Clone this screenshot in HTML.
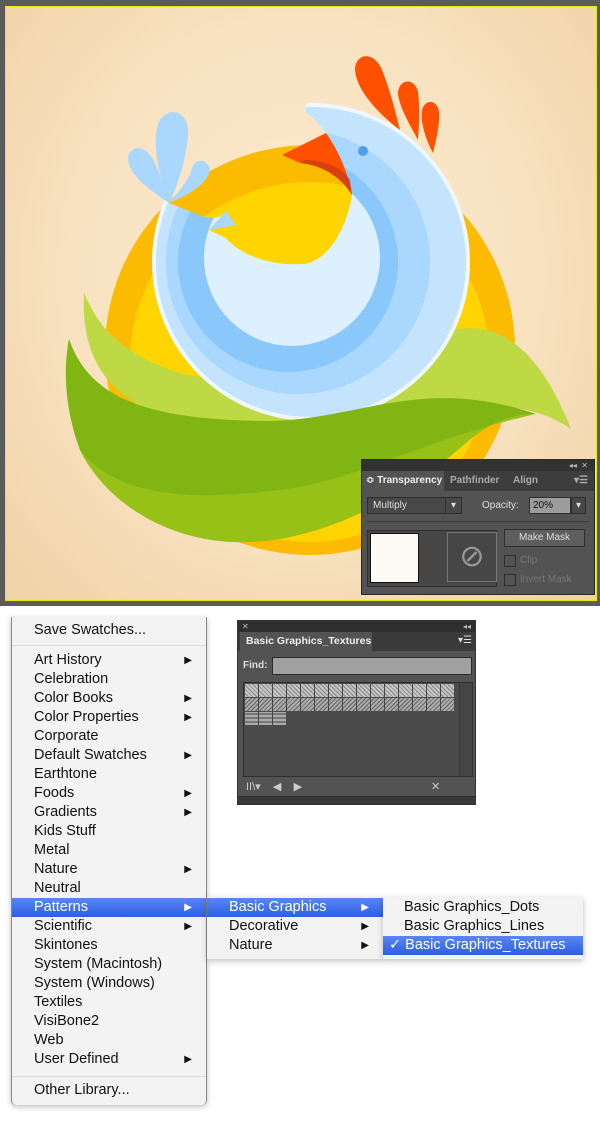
<!DOCTYPE html>
<html><head><meta charset="utf-8"><style>
*{margin:0;padding:0;box-sizing:border-box}
body{width:600px;height:1133px;background:#fff;position:relative;overflow:hidden;font-family:"Lucida Grande","Liberation Sans",sans-serif}
.top{position:absolute;left:0;top:0;width:600px;height:606px;background:#5b5b5b}
.canvas{position:absolute;left:5px;top:6px;width:592px;height:595px;border:1px solid #e8e800;background:radial-gradient(ellipse at 50% 45%,#fcebd0 0%,#f8e2c0 55%,#f0d2a6 100%);overflow:hidden}
.panel{position:absolute;left:361px;top:459px;width:234px;height:136px;background:#535353;border:1px solid #2a2a2a;font-size:10px;color:#ddd}
.panel .bar{height:11px;background:#323232;color:#bbb;font-size:8px;text-align:right;padding-right:6px;line-height:11px}
.tabs{height:20px;background:#3d3d3d;position:relative}
.tabs span{position:absolute;top:0;height:20px;line-height:20px;font-weight:bold;color:#aaa;font-size:10px;white-space:nowrap}
.box{position:absolute;border:1px solid #2e2e2e}
.menu{position:absolute;background:#f3f3f3;font-size:14.5px;color:#111;box-shadow:0 2px 6px rgba(0,0,0,.25)}
.it{position:absolute;left:0;right:0;height:19px;line-height:19px;padding-left:22px;white-space:nowrap}
.ar{position:absolute;right:14px;top:0;font-size:10px}
.hl{background:linear-gradient(#5a86f2,#2d5fe6);color:#fff}
.tp{position:absolute;left:237px;top:620px;width:239px;height:185px;background:#535353;border:1px solid #333;color:#ddd;font-size:10px}
</style></head><body>
<div class="top"><div class="canvas">
<svg width="592" height="595" viewBox="6 7 592 595" xmlns="http://www.w3.org/2000/svg">
<defs>
<mask id="m" maskUnits="userSpaceOnUse" x="0" y="0" width="600" height="600">
<rect x="0" y="0" width="600" height="600" fill="#fff"/>
<path d="M169 203 L100 60 L306 60 L306 113 C325 125 345 160 352 195 C345 235 325 262 303 264 C270 266 240 255 226 238 L209 230 L226 211 C215 225 200 215 169 203Z" fill="#000"/>
</mask>
</defs>
<circle cx="310" cy="350" r="205" fill="#fdbb00"/>
<circle cx="310" cy="362" r="180" fill="#ffd400"/>
<path d="M84 293 C100 330 120 350 170 370 C260 400 380 350 452 330 C500 320 540 350 571 429 C530 400 470 400 420 425 C340 440 250 430 192 421 C120 410 80 370 84 293Z" fill="#bfd944"/>
<g mask="url(#m)">
<circle cx="311" cy="262" r="159" fill="#eef8fe"/>
<circle cx="311" cy="262" r="155" fill="#c4e3fc"/>
<circle cx="298" cy="262" r="132" fill="#a9d7fd"/>
<circle cx="288" cy="262" r="110" fill="#8ac8fb"/>
<circle cx="292" cy="258" r="88" fill="#dcf1fd"/>
</g>
<path d="M209 230 L226 211 L236 225 Z" fill="#a9d7fd"/>
<path d="M282 155 L326 133 C338 150 348 172 352 195 C340 175 320 165 300 163 Z" fill="#ff5000"/>
<path d="M300 163 C320 165 340 175 352 195 L350 180 C343 168 325 160 305 160Z" fill="#c83a10" opacity=".7"/>
<circle cx="363" cy="151" r="5" fill="#4fa0e6"/>
<path d="M69 339 C90 400 150 420 268 421 C360 420 420 375 536 414 C500 415 480 430 460 448 C400 500 320 540 249 542 C180 545 110 510 80 450 C65 410 63 370 69 339Z" fill="#80b514"/>
<path d="M80 450 C120 500 200 500 280 490 C360 480 420 440 536 414 C500 415 480 430 460 448 C400 500 320 540 249 542 C180 545 110 510 80 450Z" fill="#97c117"/>
<path d="M169 203 C160 180 150 140 160 120 C170 105 190 112 188 135 C186 160 178 185 169 203Z" fill="#a9d7fd"/>
<path d="M169 203 C150 190 128 175 128 158 C130 145 145 145 152 158 C160 172 165 190 169 203Z" fill="#a9d7fd"/>
<path d="M169 203 C180 190 190 178 192 168 C195 158 208 158 210 170 C208 182 190 195 169 203Z" fill="#a9d7fd"/>
<path d="M400 130 C380 115 355 90 355 68 C357 52 375 52 382 70 C390 90 395 110 400 130Z" fill="#ff5000"/>
<path d="M418 140 C410 125 398 105 398 92 C400 78 415 78 418 92 C420 108 419 125 418 140Z" fill="#ff5000"/>
<path d="M433 153 C426 140 420 122 422 110 C425 98 438 100 439 112 C440 125 436 140 433 153Z" fill="#ff5000"/>
</svg>
</div>
<div class="panel">
<div class="bar">◂◂ &nbsp;✕</div>
<div class="tabs"><span style="left:0;width:82px;background:#535353;color:#eee;padding-left:4px">≎ Transparency</span><span style="left:88px">Pathfinder</span><span style="left:151px">Align</span><span style="right:6px">▾☰</span></div>
<div class="box" style="left:5px;top:37px;width:95px;height:17px;background:#484848;color:#ddd;padding-left:5px;line-height:15px">Multiply<span style="position:absolute;right:0;top:0;width:16px;border-left:1px solid #333;text-align:center">▾</span></div>
<div style="position:absolute;left:120px;top:40px;color:#ddd">Opacity:</div>
<div class="box" style="left:167px;top:37px;width:42px;height:17px;background:#9c9c9c;color:#111;padding-left:3px;line-height:15px">20%</div>
<div class="box" style="left:209px;top:37px;width:15px;height:17px;background:#484848;text-align:center;line-height:15px">▾</div>
<div style="position:absolute;left:5px;top:61px;width:222px;border-top:1px solid #3c3c3c"></div>
<div class="box" style="left:5px;top:70px;width:130px;height:57px;background:#464646"></div>
<div style="position:absolute;left:8px;top:73px;width:49px;height:50px;background:#fdfaf6;border:1px solid #111"></div>
<div style="position:absolute;left:85px;top:72px;width:50px;height:50px;border:1px solid #777;color:#999;font-size:30px;text-align:center;line-height:48px">⊘</div>
<div class="box" style="left:142px;top:69px;width:81px;height:18px;background:#5e5e5e;border-color:#2e2e2e;color:#ddd;text-align:center;line-height:16px">Make Mask</div>
<div class="box" style="left:142px;top:95px;width:12px;height:12px"></div><div style="position:absolute;left:158px;top:95px;color:#777">Clip</div>
<div class="box" style="left:142px;top:114px;width:12px;height:12px"></div><div style="position:absolute;left:158px;top:114px;color:#777">Invert Mask</div>
</div>
</div>

<div class="tp">
<div style="height:11px;background:#2f2f2f;font-size:8px;color:#bbb;line-height:11px;padding:0 4px">✕<span style="float:right">◂◂</span></div>
<div style="height:19px;background:#3a3a3a;position:relative"><span style="position:absolute;left:2px;top:0;width:132px;height:19px;background:#535353;font-weight:bold;color:#eee;padding-left:6px;line-height:19px;font-size:10.5px;white-space:nowrap">Basic Graphics_Textures</span><span style="position:absolute;right:3px;top:3px">▾☰</span></div>
<div style="position:absolute;left:5px;top:39px;font-weight:bold">Find:</div>
<div style="position:absolute;left:34px;top:36px;width:200px;height:18px;background:#a0a0a0;border:1px solid #2a2a2a"></div>
<div style="position:absolute;left:5px;top:61px;width:230px;height:95px;background:#4a4a4a;border:1px solid #2e2e2e">
<div style="position:absolute;right:0;top:0;width:13px;height:93px;background:#454545;border-left:1px solid #3a3a3a"></div>
<div style="position:absolute;left:1px;top:1px;width:209px;height:13px;background:repeating-linear-gradient(90deg,transparent 0 13px,#444 13px 14px),repeating-linear-gradient(45deg,#c4c4c4 0 2px,#8a8a8a 2px 3px)"></div>
<div style="position:absolute;left:1px;top:15px;width:209px;height:13px;background:repeating-linear-gradient(90deg,transparent 0 13px,#444 13px 14px),repeating-linear-gradient(-45deg,#aaa 0 2px,#666 2px 3px)"></div>
<div style="position:absolute;left:1px;top:29px;width:41px;height:13px;background:repeating-linear-gradient(90deg,transparent 0 13px,#444 13px 14px),repeating-linear-gradient(0deg,#aaa 0 2px,#777 2px 4px)"></div>
</div>
<div style="position:absolute;left:8px;top:159px;color:#ccc;font-size:11px">II\▾ &nbsp;&nbsp; ◀ &nbsp;&nbsp; ▶<span style="position:absolute;left:185px">✕</span></div>
<div style="position:absolute;left:0;bottom:0;width:237px;height:8px;background:#3a3a3a;border-top:1px solid #2a2a2a"></div>
</div>

<div class="menu" style="left:11px;top:617px;width:196px;height:488px;border-radius:0 0 5px 5px;border-left:1px solid #888;border-right:1px solid #888">
<div class="it" style="top:4px">Save Swatches...</div>
<div style="position:absolute;left:0;right:0;top:28px;border-top:1px solid #ddd"></div>
<div class="it" style="top:34px">Art History<span class="ar">▶</span></div>
<div class="it" style="top:53px">Celebration</div>
<div class="it" style="top:72px">Color Books<span class="ar">▶</span></div>
<div class="it" style="top:91px">Color Properties<span class="ar">▶</span></div>
<div class="it" style="top:110px">Corporate</div>
<div class="it" style="top:129px">Default Swatches<span class="ar">▶</span></div>
<div class="it" style="top:148px">Earthtone</div>
<div class="it" style="top:167px">Foods<span class="ar">▶</span></div>
<div class="it" style="top:186px">Gradients<span class="ar">▶</span></div>
<div class="it" style="top:205px">Kids Stuff</div>
<div class="it" style="top:224px">Metal</div>
<div class="it" style="top:243px">Nature<span class="ar">▶</span></div>
<div class="it" style="top:262px">Neutral</div>
<div class="it hl" style="top:281px">Patterns<span class="ar">▶</span></div>
<div class="it" style="top:300px">Scientific<span class="ar">▶</span></div>
<div class="it" style="top:319px">Skintones</div>
<div class="it" style="top:338px">System (Macintosh)</div>
<div class="it" style="top:357px">System (Windows)</div>
<div class="it" style="top:376px">Textiles</div>
<div class="it" style="top:395px">VisiBone2</div>
<div class="it" style="top:414px">Web</div>
<div class="it" style="top:433px">User Defined<span class="ar">▶</span></div>
<div style="position:absolute;left:0;right:0;top:459px;border-top:1px solid #ddd"></div>
<div class="it" style="top:464px">Other Library...</div>
</div>

<div class="menu" style="left:207px;top:897px;width:176px;height:62px">
<div class="it hl" style="top:1px;padding-left:22px">Basic Graphics<span class="ar">▶</span></div>
<div class="it" style="top:20px">Decorative<span class="ar">▶</span></div>
<div class="it" style="top:39px">Nature<span class="ar">▶</span></div>
</div>
<div class="menu" style="left:383px;top:897px;width:200px;height:62px">
<div class="it" style="top:1px;padding-left:21px">Basic Graphics_Dots</div>
<div class="it" style="top:20px;padding-left:21px">Basic Graphics_Lines</div>
<div class="it hl" style="top:39px;padding-left:6px">✓ Basic Graphics_Textures</div>
</div>
</body></html>
